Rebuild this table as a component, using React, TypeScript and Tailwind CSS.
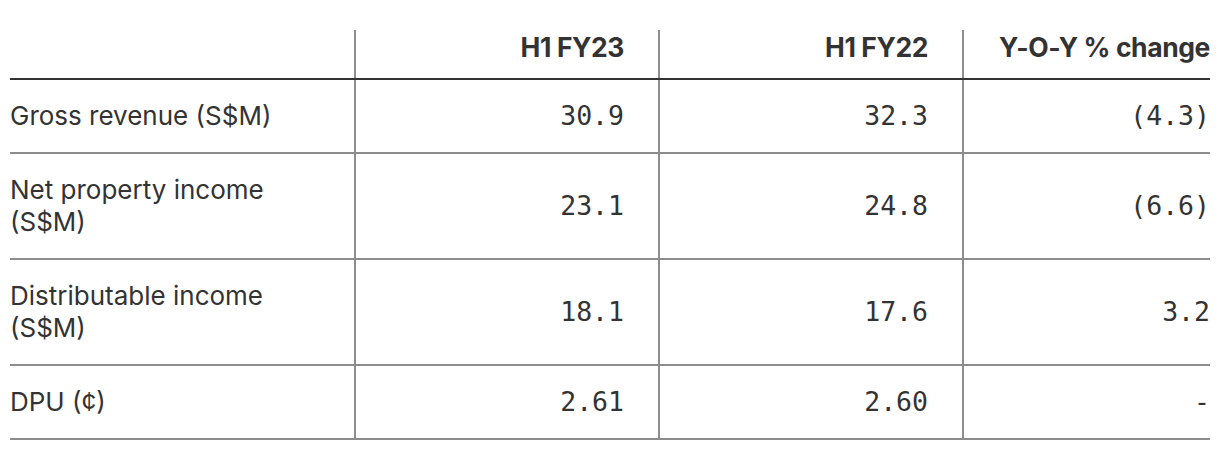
const rows = [
  { label: "Gross revenue (S$M)", a: "30.9", b: "32.3", c: "(4.3)" },
  { label: "Net property income (S$M)", a: "23.1", b: "24.8", c: "(6.6)" },
  { label: "Distributable income (S$M)", a: "18.1", b: "17.6", c: "3.2" },
  { label: "DPU (¢)", a: "2.61", b: "2.60", c: "-" },
];

function App() {
  const grid = "grid grid-cols-[344px_304px_304px_248px]";
  const num = "flex items-center justify-end font-['DejaVu_Sans_Mono',monospace] text-[26.5px]";
  const line = "border-l-2 border-[#8c8c8c]";

  return (
    <div className="min-h-screen bg-white px-[10px] pt-[30px] text-[#333] font-['Inter',sans-serif]">
      <div className="w-[1200px]">
        <div className={`${grid} h-[50px] border-b-2 border-[#333] text-[26.5px] font-bold leading-none tracking-[-0.4px]`}>
          <div></div>
          <div className={`${line} flex justify-end pt-[4px] pr-[34px]`}>H1 FY23</div>
          <div className={`${line} flex justify-end pt-[4px] pr-[34px]`}>H1 FY22</div>
          <div className={`${line} flex justify-end pt-[4px]`}>Y-O-Y % change</div>
        </div>

        {rows.map((r) => (
          <div key={r.label} className={`${grid} border-b-2 border-[#8c8c8c]`}>
            <div className="flex items-center py-[20px] pr-10 text-[26px] leading-[32px]">
              {r.label}
            </div>
            <div className={`${line} ${num} pr-[34px]`}>{r.a}</div>
            <div className={`${line} ${num} pr-[34px]`}>{r.b}</div>
            <div className={`${line} ${num}`}>{r.c}</div>
          </div>
        ))}
      </div>
    </div>
  );
}

export default App;
